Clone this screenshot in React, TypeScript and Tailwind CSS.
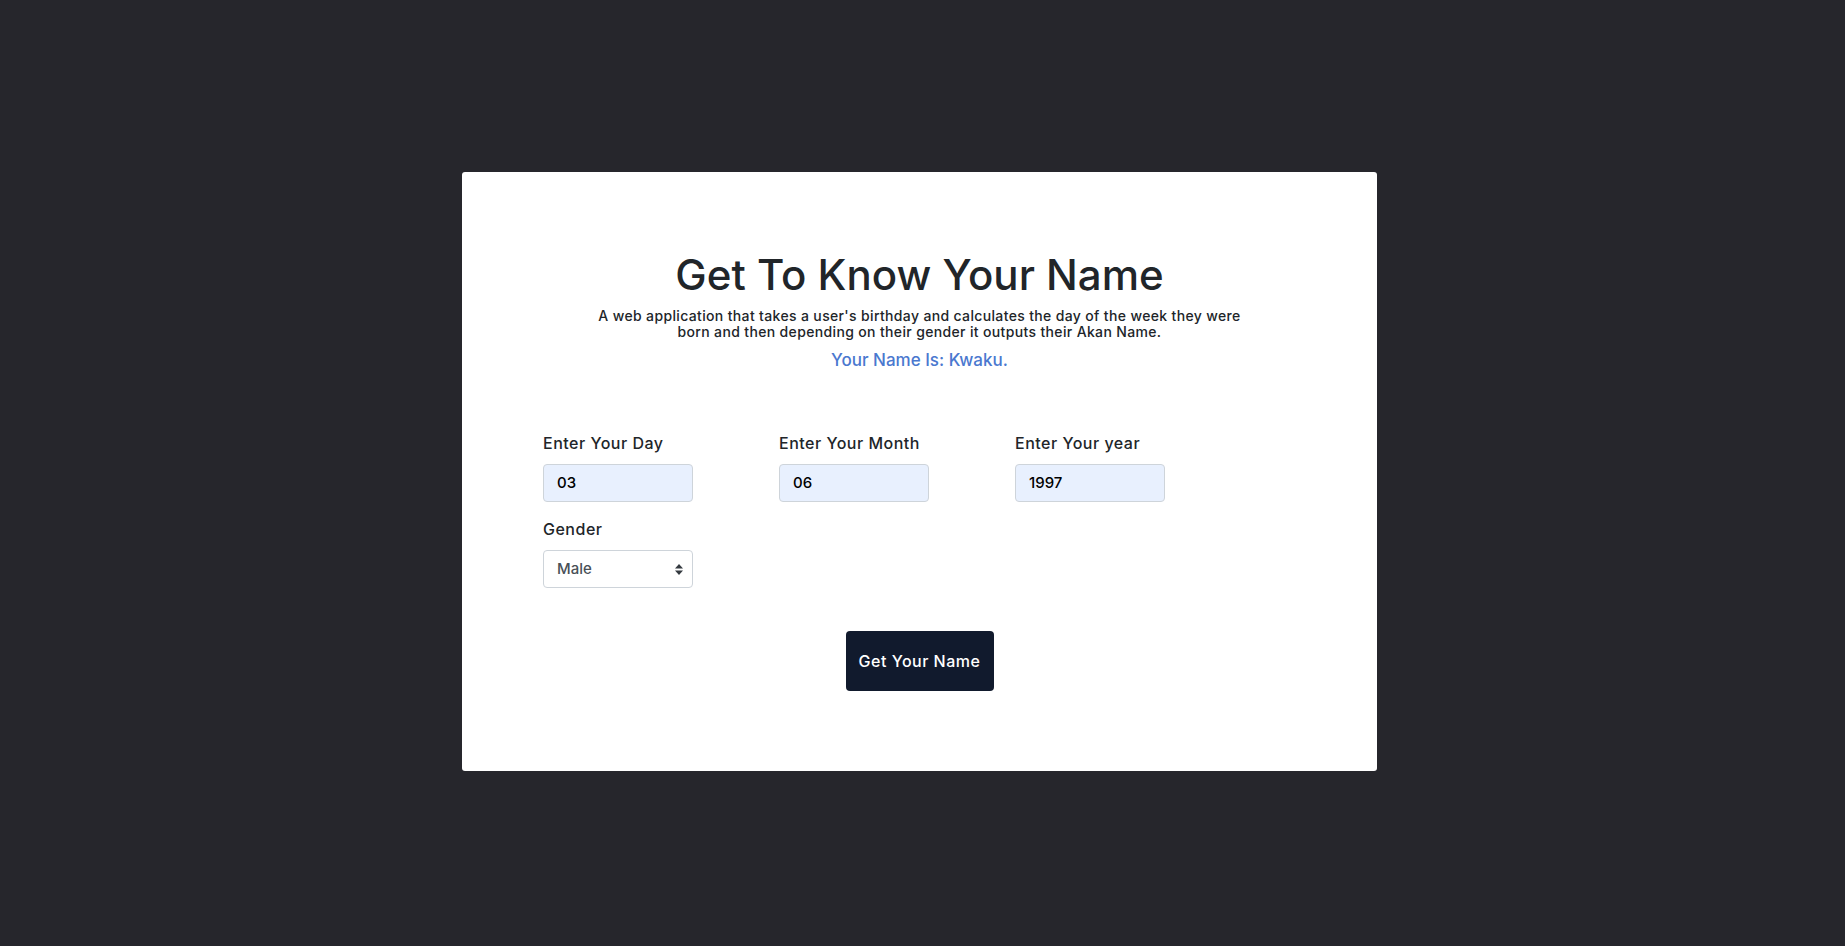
import React from "react";

export default function App() {
  const font = { fontFamily: "Inter, 'Noto Sans', sans-serif" };
  return (
    <div className="w-full h-[946px] bg-[#26262c] pt-[172px] pl-[462px]" style={font}>
      <div className="w-[915px] h-[599px] bg-white rounded-[3px] pt-[78px]">
        <h1 className="text-center text-[42px] leading-[50px] font-medium text-[#212529]">
          Get To Know Your Name
        </h1>
        <p className="mt-[8px] text-center text-[14px] leading-[16px] font-medium tracking-[0.35px] text-[#212529]">
          A web application that takes a user's birthday and calculates the day of the week they were
          <br />
          born and then depending on their gender it outputs their Akan Name.
        </p>
        <p className="mt-[8px] text-center text-[17px] leading-[24px] font-medium text-[#4a78cf]">
          Your Name Is: Kwaku.
        </p>
        <div className="pl-[81px] mt-[59px]">
          <div className="grid grid-cols-[236px_236px_236px]">
            {[
              ["Enter Your Day", "03"],
              ["Enter Your Month", "06"],
              ["Enter Your year", "1997"],
            ].map(([label, val]) => (
              <div key={label}>
                <div className="text-[16px] leading-[24px] font-medium tracking-[0.5px] text-[#212529]">{label}</div>
                <div className="mt-[9px] w-[150px] h-[38px] rounded-[4px] border border-[#ced4da] bg-[#e8f0fe] flex items-center pl-[13px] text-[15px] font-medium text-black">
                  {val}
                </div>
              </div>
            ))}
          </div>
          <div className="mt-[15px] text-[16px] leading-[24px] font-medium tracking-[0.5px] text-[#212529]">Gender</div>
          <div className="mt-[9px] w-[150px] h-[38px] rounded-[4px] border border-[#ced4da] bg-white flex items-center justify-between pl-[13px] pr-[9px] text-[15px] font-medium text-[#495057]">
            <span>Male</span>
            <svg width="8" height="11" viewBox="0 0 8 11">
              <path d="M4 0 L8 4.5 L0 4.5 Z" fill="#343a40" />
              <path d="M4 11 L8 6.5 L0 6.5 Z" fill="#343a40" />
            </svg>
          </div>
        </div>
        <div className="mt-[43px] flex justify-center">
          <button className="w-[148px] h-[60px] rounded-[4px] bg-[#111a2d] text-white text-[16px] font-medium tracking-[0.5px]">
            Get Your Name
          </button>
        </div>
      </div>
    </div>
  );
}
